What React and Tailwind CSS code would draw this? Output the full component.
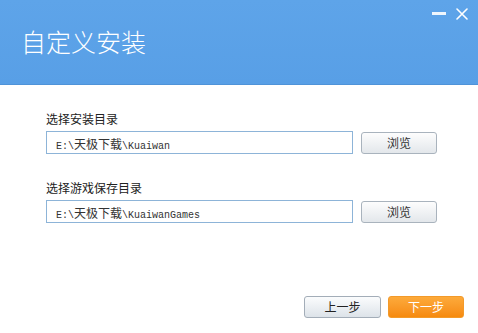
import React from 'react'

const CJK = { fontFamily: '"Noto Sans CJK SC", "Noto Sans", sans-serif' }

// path text: latin parts monospaced, CJK parts full width
function PathText({ parts }) {
  return (
    <span className="whitespace-pre">
      {parts.map((p, i) =>
        p.cjk ? (
          <span key={i} className="text-[12px] font-[Noto_Sans_CJK_SC,sans-serif]">
            {p.t}
          </span>
        ) : (
          <span key={i} className="text-[10px] font-['Liberation_Mono',monospace]">
            {p.t}
          </span>
        )
      )}
    </span>
  )
}

function DirRow({ label, parts }) {
  return (
    <div>
      <div className="h-[16px] text-[12px] leading-[16px] text-[#222]" style={CJK}>
        {label}
      </div>
      <div className="mt-[4px] flex items-center gap-[8px]">
        <div className="flex h-[23px] w-[307px] shrink-0 items-center border border-[#8db4d8] bg-white pl-[9px] text-[#333]">
          <PathText parts={parts} />
        </div>
        <button
          type="button"
          className="h-[22px] w-[76px] shrink-0 rounded-[3px] border border-[#a9b3bd] bg-gradient-to-b from-[#fdfdfd] to-[#e3e7eb] text-[12px] text-[#333]"
          style={CJK}
        >
          浏览
        </button>
      </div>
    </div>
  )
}

export default function App() {
  return (
    <div className="h-[333px] w-[478px] overflow-hidden bg-white">
      <div className="relative flex h-[85px] items-center border-b border-[#4f93d8] bg-gradient-to-b from-[#5ea4e9] to-[#589fe6] pl-[21px]">
        <div className="pb-[2px] text-[25px] font-light leading-none text-white" style={CJK}>
          自定义安装
        </div>
        <div className="absolute right-[32px] top-[12px] h-[3px] w-[14px] bg-white/90" />
        <svg className="absolute right-[10px] top-[8px]" width="12" height="12" viewBox="0 0 12 12">
          <path d="M1 1L11 11M11 1L1 11" stroke="white" strokeWidth="1.6" strokeLinecap="round" />
        </svg>
      </div>

      <div className="flex flex-col gap-[26px] pl-[46px] pr-[41px] pt-[26px]">
        <DirRow
          label="选择安装目录"
          parts={[{ t: 'E:\\' }, { t: '天极下载', cjk: true }, { t: '\\Kuaiwan' }]}
        />
        <DirRow
          label="选择游戏保存目录"
          parts={[{ t: 'E:\\' }, { t: '天极下载', cjk: true }, { t: '\\KuaiwanGames' }]}
        />
      </div>

      <div className="mt-[73px] flex justify-end gap-[7px] pr-[14px]">
        <button
          type="button"
          className="h-[22px] w-[77px] rounded-[3px] border border-[#a3adb8] bg-gradient-to-b from-[#fbfcfd] to-[#dde3e9] text-[12px] text-[#222]"
          style={CJK}
        >
          上一步
        </button>
        <button
          type="button"
          className="h-[22px] w-[76px] rounded-[3px] border border-[#f39a2a] bg-gradient-to-b from-[#fdaa3a] to-[#f68a0c] text-[12px] text-white"
          style={CJK}
        >
          下一步
        </button>
      </div>
    </div>
  )
}
